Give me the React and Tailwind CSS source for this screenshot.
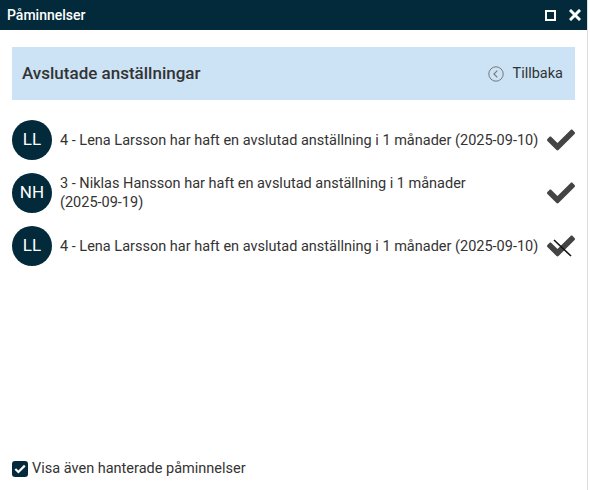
import { FaCheck } from "react-icons/fa";

const reminders = [
    { initials: 'LL', text: '4 - Lena Larsson har haft en avslutad anställning i 1 månader', date: '(2025-09-10)', struck: false },
    { initials: 'NH', text: '3 - Niklas Hansson har haft en avslutad anställning i 1 månader', date: '(2025-09-19)', struck: false },
    { initials: 'LL', text: '4 - Lena Larsson har haft en avslutad anställning i 1 månader', date: '(2025-09-10)', struck: true },
];

export default function App() {
    return (
        <div className="w-[590px] h-[490px] bg-white font-['Roboto',sans-serif]">
            <div className="w-[588px] h-full flex flex-col border-r border-[#dcdcdc]">
                {/* Title bar */}
                <div className="h-[30px] bg-[#022a3a] flex items-center justify-between pl-[7px] pr-[6px] text-white">
                    <span className="text-[14px] font-medium">Påminnelser</span>
                    <div className="flex items-center gap-[13px]">
                        <span className="block w-[11px] h-[11px] border-2 border-white" />
                        <svg width="12" height="12" viewBox="0 0 12 12">
                            <path d="M2 2 L10 10 M10 2 L2 10" stroke="white" strokeWidth="3" strokeLinecap="square" />
                        </svg>
                    </div>
                </div>

                <div className="flex-1 flex flex-col px-3 pt-[17px] pb-[10px]">
                    {/* Header */}
                    <div className="h-[53px] bg-[#cbe3f5] flex items-center justify-between pl-[10px] pr-[12px]">
                        <span className="text-[17px] font-medium text-[#333]">Avslutade anställningar</span>
                        <button type="button" className="flex items-center gap-[9px] text-[14.5px] text-[#333]">
                            <svg width="16" height="16" viewBox="0 0 16 16" fill="none">
                                <circle cx="8" cy="8" r="7.2" stroke="#777" strokeWidth="1" />
                                <path d="M9.3 4.6 L5.9 8 L9.3 11.4" stroke="#777" strokeWidth="1.1" />
                            </svg>
                            <span>Tillbaka</span>
                        </button>
                    </div>

                    {/* List */}
                    <div className="flex flex-col mt-[20px] gap-[13px]">
                        {reminders.map((r, i) => (
                            <div key={i} className="flex items-center">
                                <div className="w-10 h-10 shrink-0 rounded-full bg-[#022a3a] text-white flex items-center justify-center text-[17px]">
                                    {r.initials}
                                </div>
                                <div className="flex-1 ml-2 text-[14.5px] leading-[19px] text-[#333]">
                                    {r.text} <span className="whitespace-nowrap">{r.date}</span>
                                </div>
                                <div className="relative w-[28px] h-[28px] ml-[8px] shrink-0 flex items-center justify-center">
                                    <FaCheck className="text-[28px] text-[#444]" />
                                    {r.struck && (
                                        <svg className="absolute left-0 top-0" width="28" height="28" viewBox="0 0 28 28">
                                            <path d="M7 8 L24 24" stroke="#111" strokeWidth="1.6" />
                                        </svg>
                                    )}
                                </div>
                            </div>
                        ))}
                    </div>

                    {/* Footer */}
                    <label className="mt-auto flex items-center gap-[4px] text-[14.5px] text-[#333]">
                        <span className="w-4 h-4 rounded-[3px] bg-[#022a3a] flex items-center justify-center">
                            <svg width="12" height="10" viewBox="0 0 12 10">
                                <path d="M1.3 5 L4.4 8 L10.8 1.6" stroke="white" strokeWidth="2.2" fill="none" />
                            </svg>
                        </span>
                        <span>Visa även hanterade påminnelser</span>
                    </label>
                </div>
            </div>
        </div>
    );
}
